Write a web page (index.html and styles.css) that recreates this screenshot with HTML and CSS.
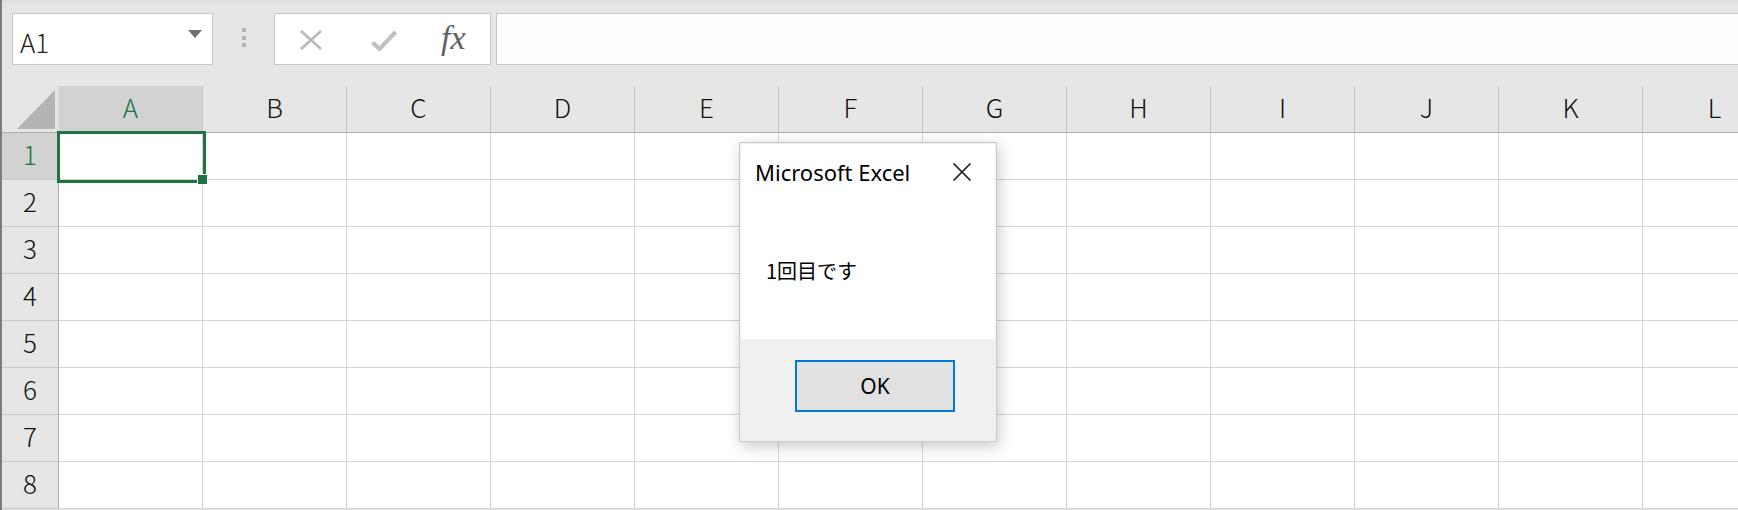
FILE: index.html
```html
<!DOCTYPE html>
<html lang="ja">
<head>
  <meta charset="UTF-8" />
  <title>Book1 - Excel</title>
  <link rel="stylesheet" href="styles.css">
</head>
<body>
  <div class="app">
    <div class="formula-bar">
      <div class="name-box">
        <span class="name-text">A1</span>
        <span class="name-arrow"></span>
      </div>
      <div class="grip"><i></i><i></i><i></i></div>
      <div class="fx-box">
        <svg class="btn-cancel" width="22" height="20" viewBox="0 0 22 20">
          <path d="M1 1 L21 19 M21 1 L1 19" stroke="#b8b8b8" stroke-width="2.6" fill="none"/>
        </svg>
        <svg class="btn-enter" width="26" height="21" viewBox="0 0 26 21">
          <polyline points="1.5,12.5 8.5,19 24.5,2" stroke="#c0c0c0" stroke-width="4.2" fill="none"/>
        </svg>
        <span class="fx">fx</span>
      </div>
      <div class="formula-input"></div>
    </div>

    <div id="sheet" class="sheet"></div>

    <div class="dialog">
      <div class="dialog-body">
        <div class="dialog-title">
          <span>Microsoft Excel</span>
          <svg class="dialog-close" width="20" height="18" viewBox="0 0 20 18">
            <path d="M1.5 0.5 L18.5 17.5 M18.5 0.5 L1.5 17.5" stroke="#1b1b1b" stroke-width="1.6" fill="none"/>
          </svg>
        </div>
        <div class="dialog-message">1回目です</div>
      </div>
      <div class="dialog-footer">
        <button class="btn-ok">OK</button>
      </div>
    </div>
  </div>

  <script>
    const colunas = 'ABCDEFGHIJKL'.split('');
    const totalLinhas = 8;
    const sheet = document.getElementById('sheet');

    function novaCelula(classe, texto) {
      const div = document.createElement('div');
      div.className = classe;
      if (texto) div.textContent = texto;
      sheet.appendChild(div);
      return div;
    }

    // canto superior esquerdo (selecionar tudo)
    const canto = novaCelula('corner');
    canto.innerHTML = '<svg width="56" height="46" viewBox="0 0 56 46"><polygon points="53,4 53,43 15,43" fill="#b4b4b4"/></svg>';

    colunas.forEach((letra, i) => {
      novaCelula('col-head' + (i === 0 ? ' active' : ''), letra);
    });

    for (let linha = 1; linha <= totalLinhas; linha++) {
      novaCelula('row-head' + (linha === 1 ? ' active' : ''), String(linha));
      colunas.forEach((letra, i) => {
        const c = novaCelula('cell');
        if (linha === 1 && i === 0) {
          c.classList.add('selected');
          c.innerHTML = '<div class="selection"><span class="fill-handle"></span></div>';
        }
      });
    }
  </script>
</body>
</html>
```

FILE: styles.css
```css
html, body {
  margin: 0;
  padding: 0;
}

body {
  font-family: 'Noto Sans CJK JP', 'Noto Sans', sans-serif;
  background-color: #e6e6e6;
  color: #222;
  overflow: hidden;
}

.app {
  position: relative;
  height: 510px;
  border-left: 2px solid #7c7c7c;
  background-color: #e6e6e6;
  overflow: hidden;
}

/* barra de fórmulas */
.formula-bar {
  display: flex;
  align-items: flex-start;
  height: 86px;
  box-sizing: border-box;
  padding: 13px 0 0 10px;
  background: linear-gradient(to bottom, #dcdcdc 0, #e6e6e6 5px);
}

.name-box {
  width: 201px;
  height: 52px;
  box-sizing: border-box;
  border: 1px solid #c6c6c6;
  background-color: #fff;
  display: flex;
  align-items: center;
  justify-content: space-between;
  padding: 6px 10px 0 7px;
}

.name-text {
  font-size: 26px;
  font-weight: 300;
  line-height: 1;
  color: #222;
}

.name-arrow {
  width: 0;
  height: 0;
  border-left: 7px solid transparent;
  border-right: 7px solid transparent;
  border-top: 8px solid #707070;
  margin-bottom: 16px;
}

.grip {
  width: 61px;
  height: 52px;
  display: flex;
  flex-direction: column;
  align-items: center;
  padding-top: 15px;
  box-sizing: border-box;
  gap: 3.5px;
}

.grip i {
  display: block;
  width: 4px;
  height: 4px;
  background-color: #b4b4b4;
}

.fx-box {
  width: 217px;
  height: 52px;
  box-sizing: border-box;
  border: 1px solid #c6c6c6;
  background-color: #fff;
  display: flex;
  align-items: center;
}

.btn-cancel {
  margin-left: 25px;
  margin-top: 2px;
}

.btn-enter {
  margin-left: 49px;
  margin-top: 3px;
}

.fx {
  margin-left: 44px;
  font-family: 'Liberation Serif', serif;
  font-style: italic;
  font-size: 34px;
  line-height: 1;
  color: #5f5f5f;
  margin-top: -2px;
}

.formula-input {
  flex: 1;
  height: 52px;
  box-sizing: border-box;
  margin-left: 5px;
  border: 1px solid #c6c6c6;
  border-right: none;
  background-color: #fdfdfd;
}

/* grade da planilha */
.sheet {
  display: grid;
  grid-template-columns: 57px repeat(12, 144px);
  grid-auto-rows: 47px;
}

.sheet > div {
  box-sizing: border-box;
}

.corner {
  background-color: #e6e6e6;
  border-right: 1px solid #dadada;
  border-bottom: 1px solid #ababab;
}

.corner svg {
  display: block;
}

.col-head,
.row-head {
  display: flex;
  align-items: center;
  justify-content: center;
  font-size: 26px;
  font-weight: 300;
  line-height: 1;
  padding-bottom: 4px;
  background-color: #e6e6e6;
  color: #111;
}

.col-head {
  border-right: 1px solid #c4c4c4;
  border-bottom: 1px solid #ababab;
}

.row-head {
  border-right: 1px solid #ababab;
  border-bottom: 1px solid #c8c8c8;
}

.col-head.active,
.row-head.active {
  background-color: #d2d2d2;
  color: #217346;
}

.cell {
  background-color: #fff;
  border-right: 1px solid #d4d4d4;
  border-bottom: 1px solid #d4d4d4;
}

.cell.selected {
  position: relative;
}

.selection {
  position: absolute;
  left: -2px;
  top: -2px;
  right: -4px;
  bottom: -4px;
  border: 3px solid #217346;
  z-index: 1;
}

.fill-handle {
  position: absolute;
  right: -4px;
  bottom: -4px;
  width: 9px;
  height: 9px;
  background-color: #217346;
  outline: 1px solid #fff;
}

/* caixa de mensagem */
.dialog {
  position: absolute;
  left: 737px;
  top: 142px;
  width: 258px;
  height: 300px;
  box-sizing: border-box;
  border: 1px solid #cacaca;
  background-color: #f0f0f0;
  padding: 1px 1px 0 1px;
  box-shadow: 2px 4px 14px rgba(0, 0, 0, 0.22);
  font-family: 'Noto Sans', sans-serif;
  color: #000;
  z-index: 5;
}

.dialog-body {
  height: 195px;
  background-color: #fff;
}

.dialog-title {
  display: flex;
  align-items: center;
  justify-content: space-between;
  padding: 13px 23px 0 14px;
  font-size: 22px;
  line-height: 30px;
}

.dialog-close {
  display: block;
}

.dialog-message {
  margin-top: 69px;
  padding-left: 25px;
  font-family: 'Noto Sans CJK JP', sans-serif;
  font-size: 20px;
}

.dialog-footer {
  padding: 21px 0 0 54px;
}

.btn-ok {
  width: 160px;
  height: 52px;
  box-sizing: border-box;
  border: 2px solid #0078d7;
  background-color: #e1e1e1;
  font-family: 'Noto Sans', sans-serif;
  font-size: 21px;
  color: #000;
  padding: 0;
}
```
